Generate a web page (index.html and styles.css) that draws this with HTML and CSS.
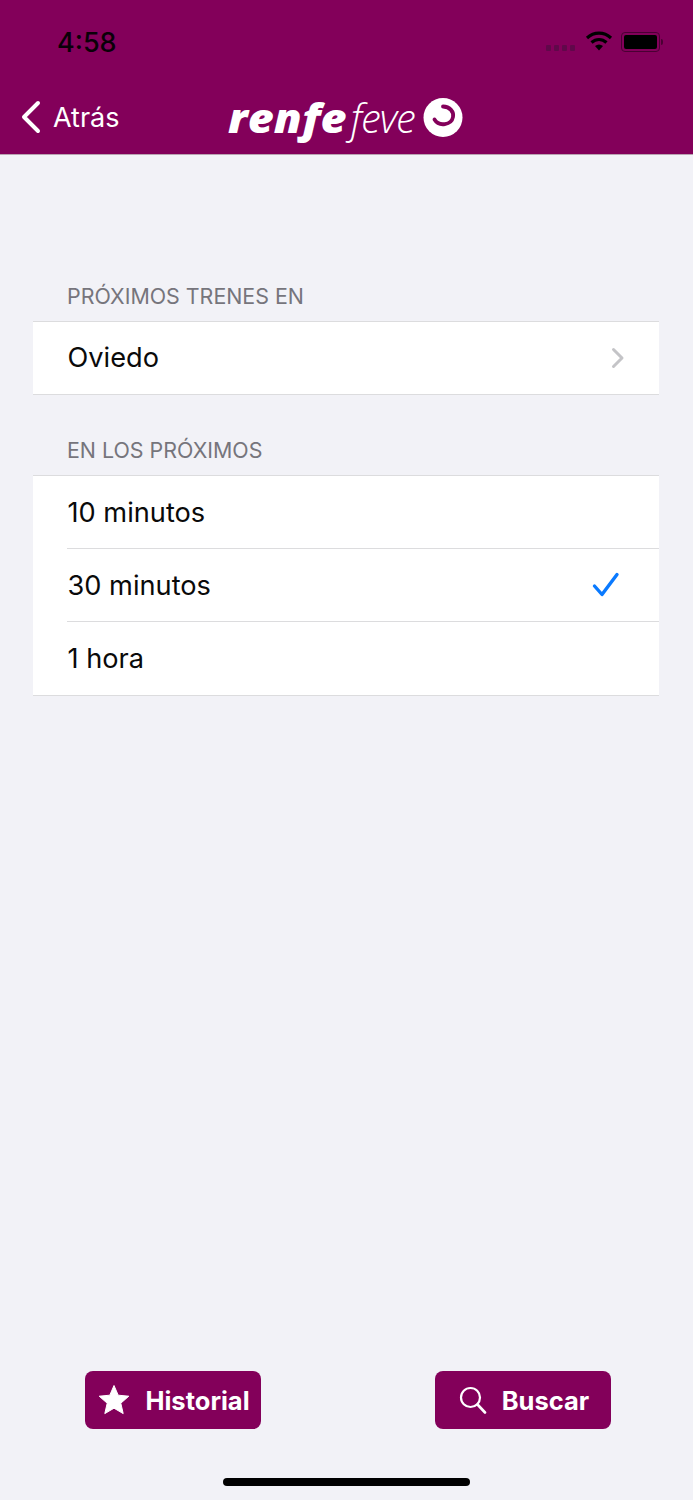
FILE: index.html
```html
<!DOCTYPE html>
<html lang="es">
<head>
  <meta charset="UTF-8" />
  <title>Renfe Feve</title>
  <link rel="stylesheet" href="styles.css">
</head>
<body>
  <div class="screen">
    <header class="top">
      <div class="status">
        <span class="time">4:58</span>
        <div class="status-icons">
          <span class="dots"><i></i><i></i><i></i><i></i></span>
          <svg class="wifi" width="28" height="21" viewBox="0 0 28 21">
            <path d="M2 8C9 1.500 19 1.500 26 8" fill="none" stroke="#000" stroke-width="3.200"/>
            <path d="M6.500 12.500C11 8.500 17 8.500 21.500 12.500" fill="none" stroke="#000" stroke-width="3.200"/>
            <path d="M10 16L14 20.500L18 16C15.500 14 12.500 14 10 16Z" fill="#000"/>
          </svg>
          <span class="battery"><span class="battery-fill"></span></span>
          <span class="battery-tip"></span>
        </div>
      </div>
      <nav class="navbar">
        <a class="back" href="#">
          <svg width="22" height="34" viewBox="0 0 22 34">
            <path d="M18 3L4 17L18 31" fill="none" stroke="#fff" stroke-width="4" stroke-linecap="round" stroke-linejoin="round"/>
          </svg>
          <span>Atrás</span>
        </a>
        <div class="logo">
          <span class="logo-renfe">renfe</span>
          <span class="logo-feve">feve</span>
          <svg class="logo-mark" width="40" height="41" viewBox="0 0 40 41">
            <circle cx="20" cy="20.500" r="19.500" fill="#fff"/>
            <path d="M20 9.500C27 9.500 31 15 30 20C28.500 28 16 30 11.500 22.500" fill="none" stroke="#83005a" stroke-width="3.800" stroke-linecap="round"/>
          </svg>
        </div>
      </nav>
    </header>

    <main class="content">
      <section class="group">
        <h2>PRÓXIMOS TRENES EN</h2>
        <ul class="list">
          <li class="row">
            <span>Oviedo</span>
            <svg width="14" height="22" viewBox="0 0 14 22">
              <path d="M2.500 2.500L11 11L2.500 19.500" fill="none" stroke="#c4c4c7" stroke-width="3" stroke-linecap="round" stroke-linejoin="round"/>
            </svg>
          </li>
        </ul>
      </section>
      <section class="group">
        <h2>EN LOS PRÓXIMOS</h2>
        <ul class="list">
          <li class="row"><span>10 minutos</span></li>
          <li class="row">
            <span>30 minutos</span>
            <svg class="check" width="28" height="26" viewBox="0 0 28 26">
              <path d="M2.500 14L10 22.500L25 2.500" fill="none" stroke="#0a7aff" stroke-width="3.400" stroke-linecap="round" stroke-linejoin="round"/>
            </svg>
          </li>
          <li class="row"><span>1 hora</span></li>
        </ul>
      </section>
    </main>

    <footer class="actions">
      <a class="btn" href="#">
        <svg width="32" height="32" viewBox="0 0 32 32">
          <path d="M16 1.500L20.200 11.200L30.800 12.200L22.800 19.200L25.200 29.600L16 24.200L6.800 29.600L9.200 19.200L1.200 12.200L11.800 11.200Z" fill="#fff" stroke="#fff" stroke-linejoin="round"/>
        </svg>
        <span>Historial</span>
      </a>
      <a class="btn" href="#">
        <svg width="28" height="28" viewBox="0 0 28 28">
          <circle cx="11.500" cy="11.500" r="9.500" fill="none" stroke="#fff" stroke-width="2.200"/>
          <path d="M18.500 18.500L26 26.500" fill="none" stroke="#fff" stroke-width="2.600" stroke-linecap="round"/>
        </svg>
        <span>Buscar</span>
      </a>
    </footer>
    <div class="home-bar"></div>
  </div>
</body>
</html>
```

FILE: styles.css
```css
body {
  font-family: Inter, "Liberation Sans", sans-serif;
  margin: 0;
  padding: 0;
  background: #f2f2f7;
}
a {
  color: white;
  text-decoration: none;
}
.screen {
  height: 1500px;
  display: flex;
  flex-direction: column;
}

/* Header */
.top {
  height: 154px;
  background: #83005a;
  border-bottom: 1px solid #b9a3b2;
}
.status {
  height: 84px;
  display: flex;
  justify-content: space-between;
  align-items: center;
  padding: 0 30px 0 57px;
  box-sizing: border-box;
}
.time {
  font-size: 27px;
  font-weight: 500;
  color: #0a0008;
}
.status-icons {
  display: flex;
  align-items: center;
}
.dots {
  display: flex;
  gap: 3px;
  margin: 12px 11px 0 0;
}
.dots i {
  width: 5px;
  height: 6px;
  border-radius: 1px;
  background: #60084a;
}
.wifi {
  margin: 0 8px 4px -1px;
}
.battery {
  width: 39px;
  height: 20px;
  padding: 2px;
  box-sizing: border-box;
  border: 1px solid #4a0033;
  border-radius: 4px;
  display: flex;
}
.battery-fill {
  flex: 1;
  background: #000;
  border-radius: 2px;
}
.battery-tip {
  width: 2px;
  height: 6px;
  margin-left: 1px;
  background: #4a0033;
  border-radius: 0 2px 2px 0;
}
.navbar {
  height: 70px;
  display: flex;
  align-items: center;
  position: relative;
  padding: 0 0 4px 20px;
  box-sizing: border-box;
}
.back {
  display: flex;
  align-items: center;
  gap: 11px;
  font-size: 27px;
}
.logo {
  position: absolute;
  left: 228px;
  top: 5px;
  height: 56px;
  display: flex;
  align-items: center;
  color: white;
}
.logo-renfe {
  font-family: "Open Sans", sans-serif;
  font-size: 41px;
  font-weight: 800;
  font-style: italic;
  display: inline-block;
  transform: scaleX(1.100);
  transform-origin: left center;
  margin-right: 11px;
}
.logo-feve {
  font-family: "Open Sans", sans-serif;
  font-size: 40px;
  font-weight: 300;
  font-style: italic;
  letter-spacing: -1px;
  margin-left: 4px;
}
.logo-mark {
  margin-left: 8px;
}

/* Lists */
.content {
  flex: 1;
  padding: 128px 34px 0 33px;
}
.group {
  margin-bottom: 42px;
}
.group h2 {
  margin: 0;
  padding: 0 0 11px 34px;
  font-size: 21.400px;
  line-height: 27px;
  font-weight: 400;
  color: #76757c;
}
.list {
  margin: 0;
  padding: 0;
  list-style: none;
  background: white;
  border-top: 1px solid #dcdcde;
  border-bottom: 1px solid #dcdcde;
}
.row {
  height: 72px;
  margin-left: 34px;
  padding-right: 34px;
  display: flex;
  align-items: center;
  justify-content: space-between;
  font-size: 27.200px;
  color: #0a0a0a;
}
.row + .row {
  border-top: 1px solid #dcdcde;
}
.row + .row:last-child {
  height: 73px;
}
.row span {
  margin-top: -1px;
  padding-left: 0.500px;
}
.group + .group .row span {
  margin-top: 0;
}
.check {
  margin-right: 5px;
}

/* Bottom buttons */
.actions {
  display: flex;
  justify-content: space-between;
  padding: 0 82px 0 85px;
}
.btn {
  width: 176px;
  height: 58px;
  padding-left: 2px;
  box-sizing: border-box;
  background: #83005a;
  border-radius: 8px;
  display: flex;
  align-items: center;
  justify-content: center;
  gap: 15px;
  font-size: 25.500px;
  font-weight: 700;
}
.home-bar {
  width: 247px;
  height: 8px;
  margin: 49px 0 14px 223px;
  background: #000;
  border-radius: 4px;
}
```
